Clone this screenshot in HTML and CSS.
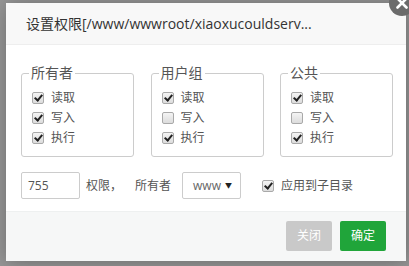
FILE: index.html
```html
<!DOCTYPE html>
<html lang="zh-CN">
<head>
	<meta charset="UTF-8">
	<title>设置权限</title>
	<link rel="stylesheet" href="styles.css">
</head>
<body>

	<div class="layer">
		<div class="layer-title">设置权限[/www/wwwroot/xiaoxucouldserv...</div>
		<a class="layer-close" href="#">
			<svg width="26" height="26" viewBox="0 0 26 26">
				<path d="M8.5 8.5 L17.5 17.5 M17.5 8.5 L8.5 17.5" stroke="#fff" stroke-width="2.6" stroke-linecap="round"/>
			</svg>
		</a>
		<div class="layer-content">
			<div class="groups">
				<fieldset class="group">
					<legend>所有者</legend>
					<label class="row"><span class="cb on"></span>读取</label>
					<label class="row"><span class="cb on"></span>写入</label>
					<label class="row"><span class="cb on"></span>执行</label>
				</fieldset>
				<fieldset class="group">
					<legend>用户组</legend>
					<label class="row"><span class="cb on"></span>读取</label>
					<label class="row"><span class="cb"></span>写入</label>
					<label class="row"><span class="cb on"></span>执行</label>
				</fieldset>
				<fieldset class="group">
					<legend>公共</legend>
					<label class="row"><span class="cb on"></span>读取</label>
					<label class="row"><span class="cb"></span>写入</label>
					<label class="row"><span class="cb on"></span>执行</label>
				</fieldset>
			</div>
			<div class="setting">
				<span class="bt-input">755</span>
				<span class="txt">权限，</span>
				<span class="txt owner">所有者</span>
				<span class="bt-select">www<i class="caret">▼</i></span>
				<label class="row sub"><span class="cb on"></span>应用到子目录</label>
			</div>
		</div>
		<div class="layer-btns">
			<a class="btn btn-off" href="#">关闭</a>
			<a class="btn btn-ok" href="#">确定</a>
		</div>
	</div>

</body>
</html>
```

FILE: styles.css
```css
body{
	margin: 0;
	height: 266px;
	overflow: hidden;
	background: #979797;
	font: 12px/1.5 "Open Sans", "Noto Sans CJK SC", sans-serif;
	color: #555;
}
a{
	text-decoration: none;
}
.layer{
	position: relative;
	width: 400px;
	margin: 3px 0 0 6px;
	background: #fff;
	box-shadow: 1px 1px 20px rgba(0,0,0,.3);
}
.layer-title{
	height: 41px;
	line-height: 41px;
	padding-left: 20px;
	font-size: 14px;
	color: #333;
	background: #f8f8f8;
	border-bottom: 1px solid #eee;
	white-space: nowrap;
	overflow: hidden;
}
/* 右上角的关闭按钮 */
.layer-close{
	position: absolute;
	top: -13px;
	right: -9px;
	width: 26px;
	height: 26px;
	border-radius: 50%;
	background: #6b6b6b;
}
.layer-close svg{
	display: block;
}
.layer-content{
	padding: 18px 13px 12px 15px;
}
.groups{
	display: flex;
	justify-content: space-between;
}
.group{
	width: 113px;
	box-sizing: border-box;
	margin: 0;
	padding: 5px 10px 8px;
	border: 1px solid #ccc;
	border-radius: 3px;
}
.group legend{
	padding: 0 2px;
	margin-left: -3px;
	font-size: 14px;
	line-height: 20px;
	color: #555;
}
.row{
	display: flex;
	align-items: center;
	height: 20px;
	color: #555;
}
.cb{
	width: 10px;
	height: 10px;
	margin-right: 7px;
	border: 1px solid #a9a9a9;
	border-radius: 2px;
	background: linear-gradient(to bottom, #f4f4f4, #dcdcdc);
	position: relative;
}
.cb.on::after{
	content: "";
	position: absolute;
	left: 3px;
	top: 0;
	width: 3px;
	height: 6px;
	border: solid #222;
	border-width: 0 2px 2px 0;
	transform: rotate(40deg);
}
.setting{
	display: flex;
	align-items: center;
	margin-top: 15px;
}
.bt-input,
.bt-select{
	box-sizing: border-box;
	width: 59px;
	height: 27px;
	line-height: 25px;
	border: 1px solid #ccc;
	border-radius: 2px;
	padding-left: 6px;
	color: #555;
}
.txt{
	margin-left: 6px;
}
.owner{
	margin-left: 13px;
	margin-right: 11px;
}
.bt-select{
	display: flex;
	justify-content: space-between;
	padding: 0 8px 0 10px;
	color: #666;
}
.caret{
	font-style: normal;
	font-size: 7px;
	color: #222;
}
.row.sub{
	margin-left: 21px;
}
.layer-btns{
	display: flex;
	justify-content: flex-end;
	gap: 8px;
	padding: 9px 20px 10px;
	background: #f6f7f7;
	border-top: 1px solid #eef0f0;
}
.btn{
	width: 46px;
	height: 30px;
	line-height: 30px;
	text-align: center;
	border-radius: 2px;
	color: #fff;
	font-size: 12px;
}
.btn-off{
	background: #c9c9c9;
}
.btn-ok{
	background: #20a53a;
}
```
